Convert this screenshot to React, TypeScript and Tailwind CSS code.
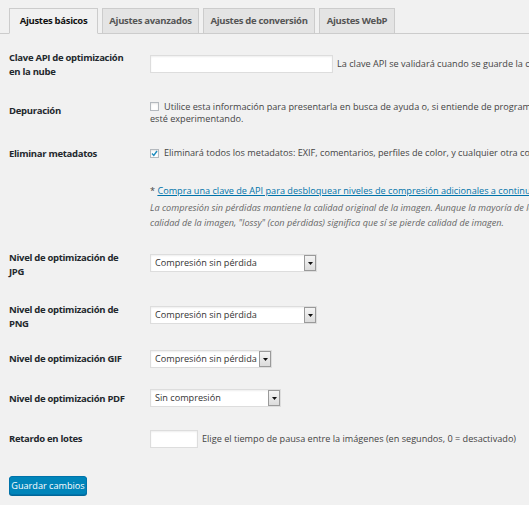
import React from "react";

const tabs = [
  { label: "Ajustes básicos", w: "w-[89px]", active: true },
  { label: "Ajustes avanzados", w: "w-[97px]", active: false },
  { label: "Ajustes de conversión", w: "w-[112px]", active: false },
  { label: "Ajustes WebP", w: "w-[76px]", active: false },
];

const Select = ({ value, w }: { value: string; w: string }) => (
  <div
    className={`${w} h-[18px] flex items-center justify-between bg-white border border-[#dddddd] shadow-[inset_0_1px_2px_rgba(0,0,0,0.07)] whitespace-nowrap`}
  >
    <span className="pl-[4px] text-[#333] leading-none">{value}</span>
    <span className="h-[16px] w-[12px] shrink-0 flex items-center justify-center bg-gradient-to-b from-[#f4f4f4] to-[#dcdcdc] border border-[#9a9a9a]">
      <svg width="5" height="3" viewBox="0 0 5 3">
        <path d="M0 0H5L2.5 3Z" fill="#111" />
      </svg>
    </span>
  </div>
);

const Label = ({ children, className = "" }: { children: React.ReactNode; className?: string }) => (
  <div
    className={`w-[141px] shrink-0 font-bold tracking-[-0.3px] text-[#23282d] text-[9.5px] leading-[13.5px] pr-2 ${className}`}
  >
    {children}
  </div>
);

const Checkbox = ({ checked }: { checked?: boolean }) => (
  <span className="inline-flex w-[9px] h-[9px] mr-[5px] align-[-1px] items-center justify-center bg-white border border-[#b4b9be] shadow-[inset_0_1px_2px_rgba(0,0,0,0.1)]">
    {checked && (
      <svg width="7" height="7" viewBox="0 0 7 7">
        <path d="M1 3.5L2.8 5.5L6 1" stroke="#1e8cbe" strokeWidth="1.4" fill="none" />
      </svg>
    )}
  </span>
);

export default function App() {
  return (
    <div
      className="w-[529px] h-[505px] overflow-hidden bg-[#f1f1f1] text-[9.15px] text-[#444]"
      style={{ fontFamily: '"Open Sans", "Noto Sans", sans-serif' }}
    >
      {/* tabs */}
      <div className="h-[34px] pt-[8px] pl-[9px] flex gap-[4px] border-b border-[#cccccc]">
        {tabs.map((t) => (
          <div
            key={t.label}
            className={`${t.w} h-[26px] flex items-center justify-center border border-[#cccccc] font-bold tracking-[-0.3px] text-[9.5px] whitespace-nowrap ${
              t.active ? "bg-[#f1f1f1] border-b-[#f1f1f1] text-[#111]" : "bg-[#e4e4e4] text-[#555]"
            }`}
          >
            {t.label}
          </div>
        ))}
      </div>

      <div className="pl-[9px]">
        {/* API key */}
        <div className="flex items-start mt-[17px]">
          <Label className="leading-[14px]">
            Clave API de optimización
            <br />
            en la nube
          </Label>
          <div className="flex items-start whitespace-nowrap">
            <div className="mt-[4px] w-[183px] h-[18px] bg-white border border-[#dddddd] shadow-[inset_0_1px_2px_rgba(0,0,0,0.07)]" />
            <span className="ml-[4px] mt-[6px] leading-[14px]">
              La clave API se validará cuando se guarde la configuración.
            </span>
          </div>
        </div>

        {/* debug */}
        <div className="flex items-start mt-[22px]">
          <Label className="mt-[3px] leading-[14px]">Depuración</Label>
          <div className="leading-[12px] whitespace-nowrap">
            <Checkbox />
            Utilice esta información para presentarla en busca de ayuda o, si entiende de programación, para ver lo que ocurre mientras
            <br />
            esté experimentando.
          </div>
        </div>

        {/* metadata */}
        <div className="flex items-start mt-[22px]">
          <Label className="leading-[14px]">Eliminar metadatos</Label>
          <div className="leading-[12px] whitespace-nowrap">
            <Checkbox checked />
            Eliminará todos los metadatos: EXIF, comentarios, perfiles de color, y cualquier otra cosa que no sea necesaria.
          </div>
        </div>

        {/* info */}
        <div className="flex items-start mt-[23px]">
          <div className="w-[141px] shrink-0" />
          <div className="whitespace-nowrap">
            <div className="leading-[14px]">
              *{" "}
              <span className="text-[#0073aa] underline">
                Compra una clave de API para desbloquear niveles de compresión adicionales a continuación
              </span>
            </div>
            <div className="mt-[2px] leading-[15px] italic text-[#666]">
              La compresión sin pérdidas mantiene la calidad original de la imagen. Aunque la mayoría de los usuarios no notarán la diferencia en la
              <br />
              calidad de la imagen, "lossy" (con pérdidas) significa que sí se pierde calidad de imagen.
            </div>
          </div>
        </div>

        {/* JPG */}
        <div className="flex items-start mt-[21px]">
          <Label>
            Nivel de optimización de
            <br />
            JPG
          </Label>
          <div className="mt-[3px]">
            <Select value="Compresión sin pérdida" w="w-[167px]" />
          </div>
        </div>

        {/* PNG */}
        <div className="flex items-start mt-[25px]">
          <Label>
            Nivel de optimización de
            <br />
            PNG
          </Label>
          <div className="mt-[3px]">
            <Select value="Compresión sin pérdida" w="w-[167px]" />
          </div>
        </div>

        {/* GIF */}
        <div className="flex items-start mt-[20px]">
          <Label className="mt-[2px] leading-[14px]">Nivel de optimización GIF</Label>
          <Select value="Compresión sin pérdida" w="w-[122px]" />
        </div>

        {/* PDF */}
        <div className="flex items-start mt-[21px]">
          <Label className="mt-[3px] leading-[14px]">Nivel de optimización PDF</Label>
          <Select value="Sin compresión" w="w-[131px]" />
        </div>

        {/* delay */}
        <div className="flex items-start mt-[23px]">
          <Label className="mt-[2px] leading-[14px]">Retardo en lotes</Label>
          <div className="flex items-start whitespace-nowrap">
            <div className="w-[48px] h-[18px] bg-white border border-[#dddddd] shadow-[inset_0_1px_2px_rgba(0,0,0,0.07)]" />
            <span className="ml-[4px] mt-[2px] leading-[14px]">
              Elige el tiempo de pausa entre la imágenes (en segundos, 0 = desactivado)
            </span>
          </div>
        </div>

        {/* submit */}
        <button className="mt-[28px] w-[78px] h-[19px] rounded-[3px] bg-[#0085ba] border border-[#0073aa] shadow-[0_1px_0_#006799] text-white text-[9.15px] leading-none whitespace-nowrap">
          Guardar cambios
        </button>
      </div>
    </div>
  );
}
